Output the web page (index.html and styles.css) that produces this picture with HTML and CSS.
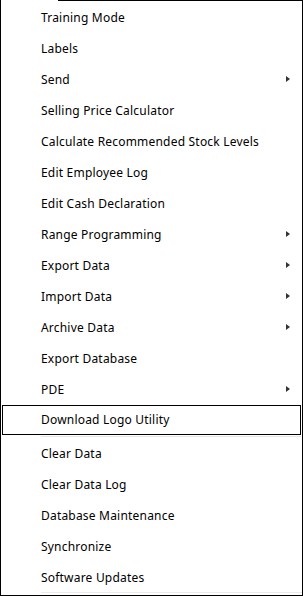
FILE: index.html
```html
<!DOCTYPE html>
<html lang="en">
<head>
  <meta charset="UTF-8">
  <title>Menu</title>
  <link rel="stylesheet" href="styles.css">
</head>
<body>

  <div class="submenu">
    <span class="top-gap"></span>
    <ul class="menu">
      <li>Training Mode</li>
      <li>Labels</li>
      <li class="has-sub">Send</li>
      <li>Selling Price Calculator</li>
      <li>Calculate Recommended Stock Levels</li>
      <li>Edit Employee Log</li>
      <li>Edit Cash Declaration</li>
      <li class="has-sub">Range Programming</li>
      <li class="has-sub">Export Data</li>
      <li class="has-sub">Import Data</li>
      <li class="has-sub">Archive Data</li>
      <li>Export Database</li>
      <li class="has-sub">PDE</li>
      <li class="activo">Download Logo Utility</li>
      <li>Clear Data</li>
      <li>Clear Data Log</li>
      <li>Database Maintenance</li>
      <li>Synchronize</li>
      <li class="ultimo">Software Updates</li>
    </ul>
  </div>

</body>
</html>
```

FILE: styles.css
```css
body {
  margin: 0;
  background: #fff;
  font-family: "Noto Sans", "Open Sans", sans-serif;
  font-size: 12px;
  letter-spacing: 0.2px;
  color: #000;
}
.submenu {
  position: relative;
  width: 301px;
  height: 594px;
  border: 1px solid #000;
  background: #fff;
}
/* hueco del borde superior, donde se une con el menu padre */
.top-gap {
  position: absolute;
  top: -1px;
  left: 0;
  width: 57px;
  height: 1px;
  background: #fff;
}
.menu {
  list-style: none;
  margin: 0;
  padding: 1px 0 0 0;
}
.menu li {
  position: relative;
  height: 31px;
  line-height: 31px;
  padding-left: 40px;
  white-space: nowrap;
}
.menu li.has-sub::after {
  content: "";
  position: absolute;
  right: 12px;
  top: 12px;
  border-top: 3.5px solid transparent;
  border-bottom: 3.5px solid transparent;
  border-left: 4px solid #333;
}
.menu li.activo {
  height: 33px;
  line-height: 30px;
  padding-left: 0;
  margin: 0 1px;
  text-indent: 39px;
  background: linear-gradient(#e6e6e6, #e6e6e6) 39px 31px / 260px 1px no-repeat;
}
.menu li.activo::before {
  content: "";
  position: absolute;
  left: 0;
  top: 0;
  right: 0;
  height: 28px;
  border: 1px solid #000;
}
.menu li.ultimo {
  background: linear-gradient(#ececec, #ececec) 40px 30px / 261px 1px no-repeat;
}
```
